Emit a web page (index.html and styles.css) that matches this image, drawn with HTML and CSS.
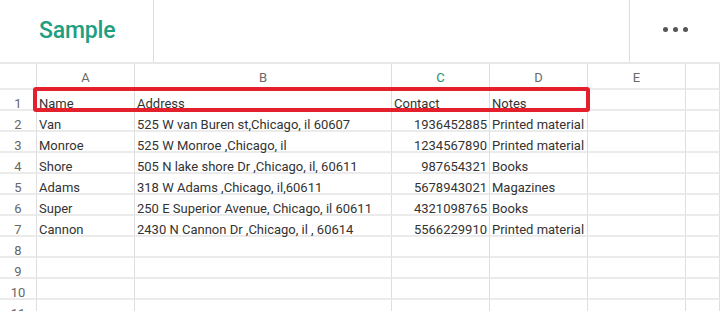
FILE: index.html
```html
<!DOCTYPE html>
<html>
<head>
<meta charset="utf-8">
<link rel="stylesheet" href="styles.css">
</head>
<body>
<div class="app">
  <header class="topbar">
    <div class="title-box"><span class="title">Sample</span></div>
    <div class="spacer"></div>
    <div class="menu-box"><span class="dot"></span><span class="dot"></span><span class="dot"></span></div>
  </header>
  <div class="sheet">
    <div class="grid">
      <div class="c hd corner"></div><div class="c hd">A</div><div class="c hd">B</div><div class="c hd sel">C</div><div class="c hd">D</div><div class="c hd">E</div><div class="c hd"></div>

      <div class="c rn">1</div><div class="c">Name</div><div class="c">Address</div><div class="c">Contact</div><div class="c">Notes</div><div class="c"></div><div class="c"></div>

      <div class="c rn">2</div><div class="c">Van</div><div class="c">525 W van Buren st,Chicago, il 60607</div><div class="c num">1936452885</div><div class="c">Printed material</div><div class="c"></div><div class="c"></div>

      <div class="c rn">3</div><div class="c">Monroe</div><div class="c">525 W Monroe ,Chicago, il</div><div class="c num">1234567890</div><div class="c">Printed material</div><div class="c"></div><div class="c"></div>

      <div class="c rn">4</div><div class="c">Shore</div><div class="c">505 N lake shore Dr ,Chicago, il, 60611</div><div class="c num">987654321</div><div class="c">Books</div><div class="c"></div><div class="c"></div>

      <div class="c rn">5</div><div class="c">Adams</div><div class="c">318 W Adams ,Chicago, il,60611</div><div class="c num">5678943021</div><div class="c">Magazines</div><div class="c"></div><div class="c"></div>

      <div class="c rn">6</div><div class="c">Super</div><div class="c">250 E Superior Avenue, Chicago, il 60611</div><div class="c num">4321098765</div><div class="c">Books</div><div class="c"></div><div class="c"></div>

      <div class="c rn">7</div><div class="c">Cannon</div><div class="c">2430 N Cannon Dr ,Chicago, il , 60614</div><div class="c num">5566229910</div><div class="c">Printed material</div><div class="c"></div><div class="c"></div>

      <div class="c rn">8</div><div class="c"></div><div class="c"></div><div class="c"></div><div class="c"></div><div class="c"></div><div class="c"></div>
      <div class="c rn">9</div><div class="c"></div><div class="c"></div><div class="c"></div><div class="c"></div><div class="c"></div><div class="c"></div>
      <div class="c rn">10</div><div class="c"></div><div class="c"></div><div class="c"></div><div class="c"></div><div class="c"></div><div class="c"></div>
      <div class="c rn">11</div><div class="c"></div><div class="c"></div><div class="c"></div><div class="c"></div><div class="c"></div><div class="c"></div>
    </div>
    <div class="highlight"></div>
  </div>
</div>
</body>
</html>
```
FILE: styles.css
```css
html, body {
  margin: 0;
  padding: 0;
  background: #ffffff;
  overflow: hidden;
}
.app {
  width: 720px;
  height: 311px;
  overflow: hidden;
  font-family: Roboto, "Noto Sans", sans-serif;
  color: #333333;
}
.topbar {
  display: flex;
  height: 62px;
}
.title-box {
  border-right: 1px solid #dddddd;
  box-sizing: border-box;
  width: 154px;
  padding-left: 39px;
  display: flex;
  align-items: center;
}
.title {
  font-size: 23px;
  font-weight: 500;
  color: #1f9e80;
  letter-spacing: -0.2px;
  padding-bottom: 2px;
}
.spacer {
  flex: 1;
}
.menu-box {
  width: 91px;
  border-left: 1px solid #dddddd;
  display: flex;
  align-items: center;
  justify-content: center;
  gap: 5px;
  padding-bottom: 4px;
  box-sizing: border-box;
}
.dot {
  width: 5px;
  height: 5px;
  border-radius: 50%;
  background: #555555;
}
.sheet {
  position: relative;
  border-top: 2px solid #e8e8e8;
}
.grid {
  display: grid;
  grid-template-columns: 37px 98px 257px 98px 98px 98px 1fr;
  grid-auto-rows: 21px;
  grid-template-rows: 26px;
}
.c {
  box-sizing: border-box;
  border-right: 1px solid #dedede;
  border-bottom: 2px solid #ebebeb;
  font-size: 13px;
  line-height: 15px;
  padding: 6px 2px 0 2px;
  white-space: nowrap;
  overflow: visible;
}
.hd {
  text-align: center;
  color: #6a6a6a;
  padding-top: 6px;
}
.hd.sel {
  color: #1f8f78;
}
.rn {
  text-align: center;
  color: #666666;
  padding-left: 0;
  padding-right: 0;
}
.num {
  text-align: right;
}
.highlight {
  position: absolute;
  left: 33px;
  top: 23px;
  width: 557px;
  height: 25px;
  box-sizing: border-box;
  border: 4px solid #e3202b;
  border-radius: 3px;
}
```
